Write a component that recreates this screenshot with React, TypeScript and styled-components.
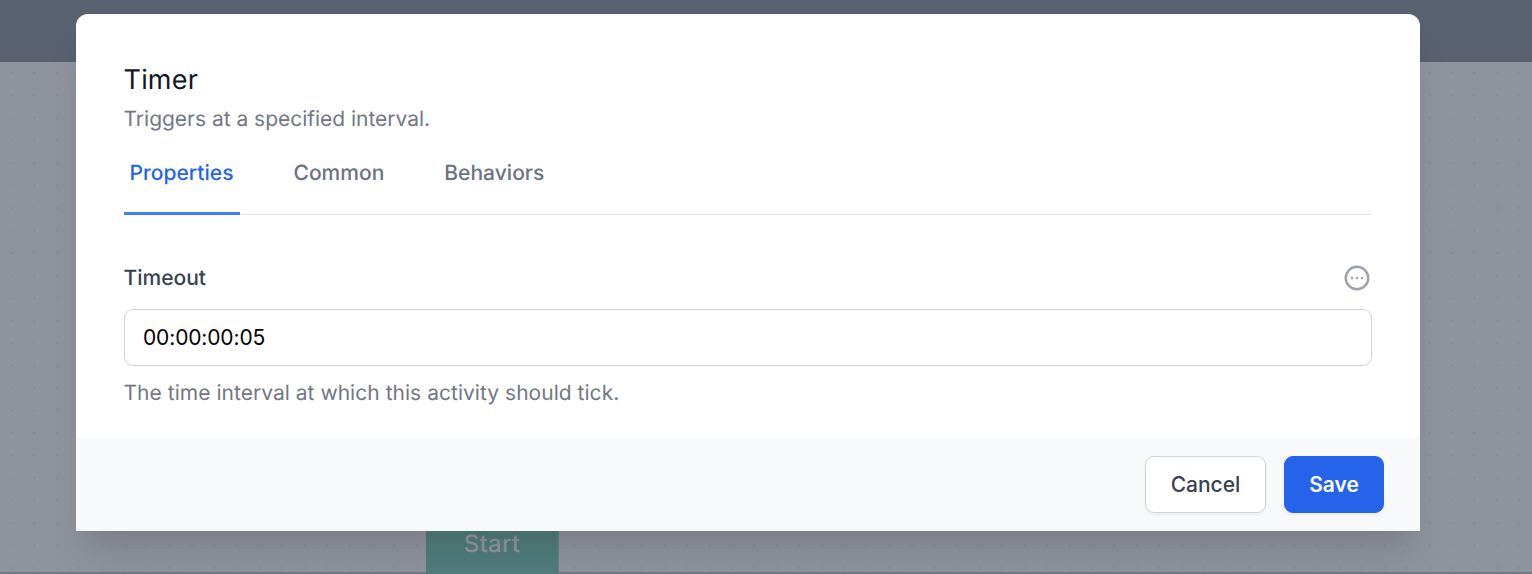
import React from "react";
import styled, { createGlobalStyle } from "styled-components";

const GlobalStyle = createGlobalStyle`
  *, *::before, *::after { box-sizing: border-box; }
  body {
    margin: 0;
    overflow: hidden;
    font-family: Inter, "Liberation Sans", sans-serif;
    font-size: 21px;
    line-height: 30px;
    text-rendering: geometricPrecision;
  }
  button, input { font: inherit; letter-spacing: inherit; }
`;

const Screen = styled.div`
  position: relative;
  display: flex;
  flex-direction: column;
  height: 574px;
  overflow: hidden;
`;

const TopBar = styled.div`
  height: 62px;
  background: #596070;
`;

const Canvas = styled.div`
  position: relative;
  flex: 1;
  border-bottom: 2px solid #737782;
  background-color: #8f939e;
  background-image: radial-gradient(circle at 12px 11px, #868b95 0.9px, transparent 1.5px);
  background-size: 22.5px 22.5px;
`;

const StartNode = styled.div`
  position: absolute;
  left: 426px;
  top: 447px;
  width: 133px;
  height: 65px;
  padding-top: 20px;
  background: #517d7c;
  border-right: 1px solid #6d8388;
  color: #93969f;
  font-size: 24px;
  font-weight: 500;
  letter-spacing: 0.2px;
  text-align: center;
`;

const Overlay = styled.div`
  position: absolute;
  inset: 0;
  display: flex;
  justify-content: center;
  align-items: flex-start;
  padding: 14px 112px 0 76px;
`;

const Dialog = styled.section`
  flex: 1;
  border-radius: 12px 12px 0 0;
  background: #fff;
  box-shadow: 0 30px 37.5px -7.5px rgba(0, 0, 0, 0.1), 0 15px 15px -7.5px rgba(0, 0, 0, 0.04);
`;

const Body = styled.div`
  height: 424px;
  padding: 48px 48px 0;
`;

const Title = styled.h3`
  margin: 0;
  color: #111827;
  font-size: 27px;
  font-weight: 400;
  letter-spacing: 0.2px;
  line-height: 36px;
  text-indent: -0.5px;
`;

const Description = styled.p<{ $top: number; $spacing: number }>`
  margin: ${(p) => p.$top}px 0 0;
  color: #717785;
  font-weight: 400;
  letter-spacing: ${(p) => p.$spacing}px;
  text-indent: -0.5px;
`;

const Tabs = styled.nav`
  display: flex;
  gap: 48px;
  height: 80px;
  border-bottom: 1px solid #e5e7eb;
`;

const Tab = styled.a<{ $active?: boolean }>`
  height: 80px;
  padding: 24px 6.5px 0 6px;
  border-bottom: 3px solid ${(p) => (p.$active ? "#3b82f6" : "transparent")};
  color: ${(p) => (p.$active ? "#2563eb" : "#6b7280")};
  font-weight: 500;
  letter-spacing: 0.02px;
  text-indent: -0.5px;
`;

const FieldHeader = styled.div`
  display: flex;
  justify-content: space-between;
  align-items: flex-start;
  height: 30px;
  margin-top: 48px;
`;

const Label = styled.label`
  padding-top: 1px;
  color: #374151;
  font-weight: 500;
  text-indent: -0.5px;
`;

const MoreIcon = styled.svg`
  width: 30px;
  height: 30px;
  fill: none;
  stroke: #9ca3af;
  stroke-width: 2;
  stroke-linecap: round;
  stroke-linejoin: round;
`;

const Input = styled.input`
  display: block;
  width: 100%;
  height: 57px;
  margin-top: 16px;
  padding: 0 18px;
  border: 1px solid #d1d5db;
  border-radius: 9px;
  background: #fff;
  color: #000;
  font-weight: 400;
  letter-spacing: -0.14px;
  outline: none;
`;

const Footer = styled.footer`
  display: flex;
  justify-content: flex-end;
  gap: 18px;
  height: 93px;
  padding: 18px 36px;
  background: #f8f9fb;
`;

const Button = styled.button<{ $primary?: boolean }>`
  width: ${(p) => (p.$primary ? 100 : 121)}px;
  height: 57px;
  padding: 0;
  border: 1px solid ${(p) => (p.$primary ? "#2563eb" : "#d1d5db")};
  border-radius: 9px;
  background: ${(p) => (p.$primary ? "#2563eb" : "#fff")};
  color: ${(p) => (p.$primary ? "#fff" : "#374151")};
  font-weight: ${(p) => (p.$primary ? 600 : 500)};
  box-shadow: 0 1.5px 3px rgba(0, 0, 0, 0.05);
`;

export default function App() {
  return (
    <Screen>
      <GlobalStyle />
      <TopBar />
      <Canvas>
        <StartNode>Start</StartNode>
      </Canvas>
      <Overlay>
        <Dialog role="dialog">
          <Body>
            <Title>Timer</Title>
            <Description $top={7} $spacing={-0.02}>Triggers at a specified interval.</Description>
            <Tabs>
              <Tab $active>Properties</Tab>
              <Tab>Common</Tab>
              <Tab>Behaviors</Tab>
            </Tabs>
            <FieldHeader>
              <Label htmlFor="timeout">Timeout</Label>
              <MoreIcon viewBox="0 0 24 24">
                <path d="M8 12h.01M12 12h.01M16 12h.01M21 12a9 9 0 11-18 0 9 9 0 0118 0z" />
              </MoreIcon>
            </FieldHeader>
            <Input id="timeout" defaultValue="00:00:00:05" />
            <Description $top={13} $spacing={0.03}>The time interval at which this activity should tick.</Description>
          </Body>
          <Footer>
            <Button>Cancel</Button>
            <Button $primary>Save</Button>
          </Footer>
        </Dialog>
      </Overlay>
    </Screen>
  );
}
